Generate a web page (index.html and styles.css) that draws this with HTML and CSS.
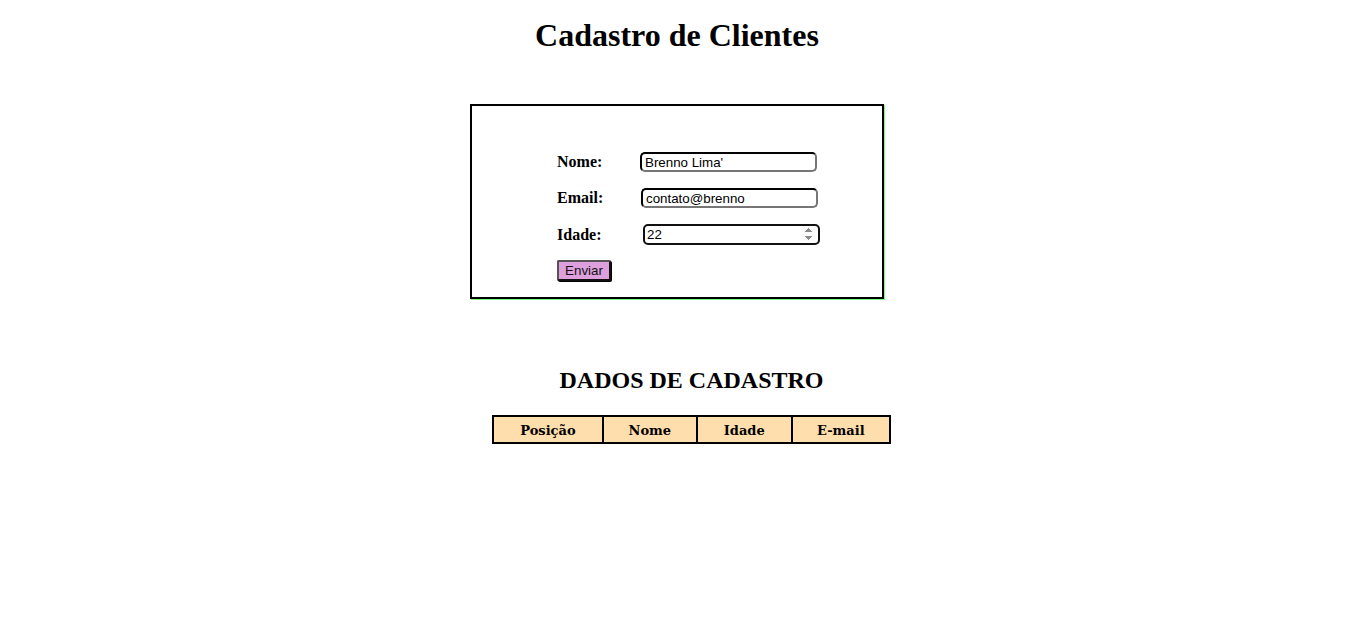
FILE: index.html
```html
<!DOCTYPE html>
<html lang="pt-BR">
<head>
  <meta charset="UTF-8">
  <meta name="viewport" content="width=device-width, initial-scale=1.0">
  <title>Cadastro de Clientes</title>
  <link rel="stylesheet" href="styles.css">
</head>
<body>
  <h1 class="title">Cadastro de Clientes</h1>

  <!-- Formulario -->
  <div class="form-box">
    <form class="form" onsubmit="return false">
      <div class="row">
        <label class="label" for="nome">Nome:</label>
        <input class="field" type="text" id="nome" value="Brenno Lima'">
      </div>
      <div class="row">
        <label class="label label-email" for="email">Email:</label>
        <input class="field" type="text" id="email" value="contato@brenno">
      </div>
      <div class="row">
        <label class="label label-idade" for="idade">Idade:</label>
        <input class="field field-num" type="number" id="idade" value="22">
      </div>
      <div class="row">
        <button class="button" type="submit">Enviar</button>
      </div>
    </form>
  </div>

  <!-- Tabela -->
  <div class="data">
    <h2 class="subtitle">DADOS DE CADASTRO</h2>
    <table class="table">
      <tr>
        <th class="col-pos">Posição</th>
        <th class="col-nome">Nome</th>
        <th class="col-idade">Idade</th>
        <th class="col-email">E-mail</th>
      </tr>
    </table>
  </div>
</body>
</html>
```

FILE: styles.css
```css
body {
  margin: 0;
  background-color: #fff;
  font-family: "Liberation Serif", "Times New Roman", serif;
  color: #000;
}

.title {
  text-align: center;
  font-size: 32px;
  margin: 15px 2px 0 0;
  line-height: 40px;
}

/* Form box */
.form-box {
  width: 410px;
  margin: 49px auto 0;
  border: 2px solid #000;
  box-shadow: 1px 1px 0 #7cfc7c;
  padding: 46px 0 16px;
  position: relative;
  left: -1px;
}

.form {
  padding-left: 85px;
}

.row {
  display: flex;
  align-items: center;
  height: 20px;
  margin-bottom: 16px;
}

.row:nth-child(3) {
  height: 21px;
  margin-bottom: 15px;
}

.row:last-child {
  height: 21px;
  margin-bottom: 0;
}

.label {
  font-weight: bold;
  font-size: 16px;
  width: 83px;
}

.label-email {
  width: 84px;
}

.label-idade {
  width: 86px;
}

.field {
  box-sizing: border-box;
  width: 177px;
  height: 20px;
  padding: 1px 3px;
  border: 2px inset #767676;
  border-top-color: #222;
  border-left-color: #222;
  border-radius: 5px;
  font-family: "Liberation Sans", Arial, sans-serif;
  font-size: 13.33px;
  color: #000;
  background-color: #fff;
}

.field-num {
  height: 21px;
  border: 2px solid #111;
  padding-left: 2px;
  padding-right: 2px;
}

.field-num::-webkit-inner-spin-button {
  opacity: 1;
  height: 15px;
}

.button {
  box-sizing: border-box;
  height: 21px;
  width: 54px;
  padding: 0;
  font-family: "Liberation Sans", Arial, sans-serif;
  font-size: 13.33px;
  color: #111;
  background-color: #dda0dd;
  border: 2px solid #555;
  border-right-color: #111;
  border-bottom-color: #111;
  border-radius: 2px;
  box-shadow: 1px 1px 0 #000;
  cursor: pointer;
}

/* Dados */
.data {
  width: 399px;
  margin: 67px auto 0;
  padding-left: 27px;
}

.subtitle {
  text-align: center;
  font-size: 24px;
  margin: 0 0 21px;
  line-height: 28px;
}

.table {
  border-collapse: collapse;
  width: 399px;
}

.table th {
  border: 2px solid #000;
  background-color: #ffdead;
  font-family: "DejaVu Serif", Cambria, serif;
  font-size: 13px;
  height: 24px;
  padding: 1px 0 0;
}

.col-pos { width: 110px; }
.col-nome { width: 94px; }
.col-idade { width: 95px; }
.col-email { width: 99px; }
```
